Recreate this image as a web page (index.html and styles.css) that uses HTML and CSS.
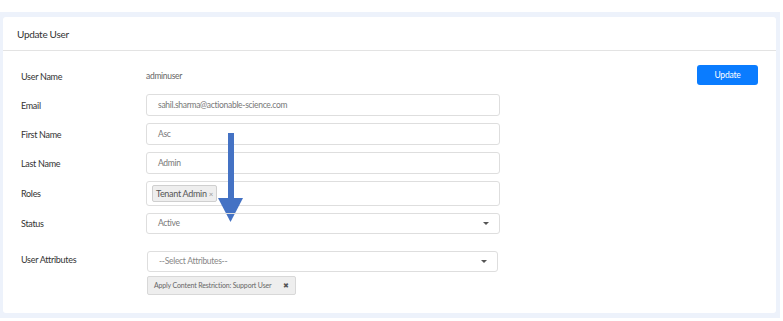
FILE: index.html
```html
<!DOCTYPE html>
<html lang="en">
<head>
    <meta charset="UTF-8">
    <title>Update User</title>
    <link rel="stylesheet" href="styles.css">
</head>
<body>
    <div class="page">
        <div class="card">
            <div class="card-header">Update User</div>
            <div class="card-body">
                <div class="form">
                    <div class="label">User Name</div>
                    <div class="value">adminuser</div>

                    <div class="label">Email</div>
                    <div class="input">sahil.sharma@actionable-science.com</div>

                    <div class="label">First Name</div>
                    <div class="input">Asc</div>

                    <div class="label">Last Name</div>
                    <div class="input">Admin</div>

                    <div class="label">Roles</div>
                    <div class="input roles">
                        <span class="tag">Tenant Admin <span class="x">×</span></span>
                        <svg class="arrow" width="26" height="92" viewBox="0 0 26 92">
                            <rect x="10" y="0" width="6" height="66" fill="#4472c4"/>
                            <polygon points="0,65 25,65 12.5,89" fill="#4472c4"/>
                        </svg>
                    </div>

                    <div class="label">Status</div>
                    <div class="input select">Active <span class="caret"></span></div>

                    <div class="label attr-label">User Attributes</div>
                    <div class="attr">
                        <div class="input select placeholder">--Select Attributes-- <span class="caret"></span></div>
                        <div class="chip">Apply Content Restriction: Support User <span class="chip-x">✖</span></div>
                    </div>
                </div>
                <button class="btn">Update</button>
            </div>
        </div>
    </div>
</body>
</html>
```

FILE: styles.css
```css
body {
    margin: 0;
    font-family: "Lato", "Open Sans", sans-serif;
    background: #ffffff;
    color: #333;
}

.page {
    margin-top: 12px;
    width: 780px;
    background: #edf2fb;
    padding: 5px 4px 5px 3px;
    box-sizing: border-box;
}

.card {
    background: #ffffff;
    border-radius: 3px;
}

.card-header {
    height: 33px;
    line-height: 35px;
    padding-left: 14px;
    font-size: 10px;
    letter-spacing: -0.3px;
    color: #333;
    border-bottom: 1px solid #e3e3e3;
}

.card-body {
    display: flex;
    justify-content: space-between;
    align-items: flex-start;
    padding: 14px 18px 18px 18px;
}

.form {
    display: grid;
    grid-template-columns: 125px 354px;
    row-gap: 7px;
    align-items: center;
}

.label {
    font-size: 9px;
    letter-spacing: -0.3px;
    color: #333;
}

.value {
    height: 22px;
    line-height: 22px;
    font-size: 8.5px;
    letter-spacing: -0.3px;
    color: #666;
}

.input {
    position: relative;
    height: 22px;
    line-height: 20px;
    box-sizing: border-box;
    border: 1px solid #dedede;
    border-radius: 3px;
    padding: 0 11px;
    font-size: 8.5px;
    letter-spacing: -0.3px;
    color: #777;
}

.roles {
    height: 25px;
    padding: 3px 5px;
    line-height: 15px;
}

.tag {
    display: inline-block;
    height: 17px;
    line-height: 15px;
    box-sizing: border-box;
    background: #eeeeee;
    border: 1px solid #cfcfcf;
    border-radius: 2px;
    padding: 0 3px;
    color: #555;
    font-size: 9px;
    letter-spacing: -0.3px;
}

.tag .x {
    color: #999;
    font-size: 8px;
}

.arrow {
    position: absolute;
    left: 71px;
    top: -49px;
}

.select {
    height: 21px;
    line-height: 19px;
}

.caret {
    position: absolute;
    right: 10px;
    top: 8px;
    border-left: 3px solid transparent;
    border-right: 3px solid transparent;
    border-top: 3px solid #555;
}

.attr-label {
    align-self: start;
    margin-top: 13px;
}

.attr {
    padding-top: 10px;
    padding-left: 1px;
    width: 351px;
}

.placeholder {
    color: #888;
}

.chip {
    display: inline-block;
    margin-top: 4px;
    height: 19px;
    line-height: 17px;
    box-sizing: border-box;
    background: #eeeeee;
    border: 1px solid #d8d8d8;
    border-radius: 2px;
    padding: 0 6px;
    font-size: 7px;
    letter-spacing: -0.15px;
    color: #666;
}

.chip-x {
    margin-left: 10px;
    color: #555;
    font-size: 7px;
}

.btn {
    width: 61px;
    height: 20px;
    border: none;
    border-radius: 3px;
    background: #0a7cff;
    color: #ffffff;
    font-family: inherit;
    font-size: 8.5px;
    letter-spacing: -0.2px;
    cursor: pointer;
}
```
